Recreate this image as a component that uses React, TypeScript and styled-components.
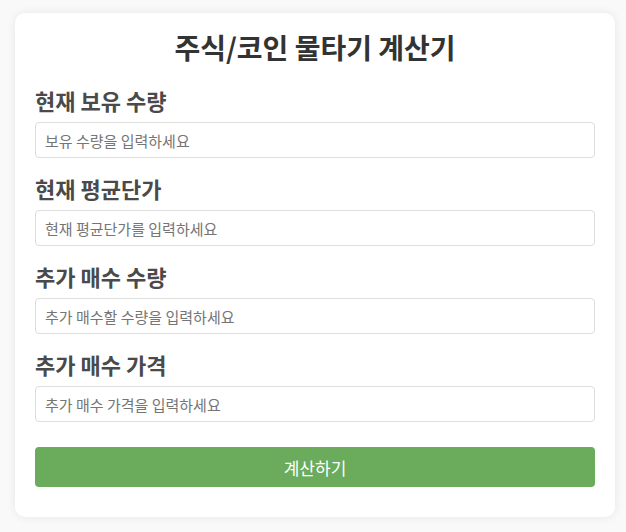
import React from 'react'
import styled, { createGlobalStyle } from 'styled-components'

const GlobalStyle = createGlobalStyle`
	body {
		margin: 0;
		background: #f9f9f9;
		font-family: 'Noto Sans CJK KR', 'Noto Sans', sans-serif;
	}
`

const fields = [
	{ id: 'holding', label: '현재 보유 수량', placeholder: '보유 수량을 입력하세요' },
	{ id: 'avg', label: '현재 평균단가', placeholder: '현재 평균단가를 입력하세요' },
	{ id: 'addQty', label: '추가 매수 수량', placeholder: '추가 매수할 수량을 입력하세요' },
	{ id: 'addPrice', label: '추가 매수 가격', placeholder: '추가 매수 가격을 입력하세요' },
]

export default function App(): JSX.Element {
	return (
		<>
			<GlobalStyle />
			<Page>
				<Card>
					<Title>주식/코인 물타기 계산기</Title>
					{fields.map((f) => (
						<Group key={f.id}>
							<Label htmlFor={f.id}>{f.label}</Label>
							<Input id={f.id} type="number" placeholder={f.placeholder} />
						</Group>
					))}
					<Button type="button">계산하기</Button>
				</Card>
			</Page>
		</>
	)
}

const Page = styled.div`
	padding: 13px 11px 13px 15px;
`

const Card = styled.div`
	box-sizing: border-box;
	width: 600px;
	padding: 20px 20px 30px;
	background: #fff;
	border-radius: 10px;
	box-shadow: 0 0 10px rgba(0, 0, 0, 0.08);
`

const Title = styled.h1`
	margin: 0 0 26px;
	text-align: center;
	font-size: 28px;
	font-weight: 700;
	color: #333;
	line-height: 28px;
`

const Group = styled.div`
	margin-bottom: 17px;
`

const Label = styled.label`
	display: block;
	margin-bottom: 9px;
	font-size: 22px;
	font-weight: 700;
	color: #4a4a4a;
	line-height: 26px;
`

const Input = styled.input`
	box-sizing: border-box;
	display: block;
	width: 100%;
	height: 36px;
	padding: 0 9px;
	border: 1px solid #ddd;
	border-radius: 4px;
	font-family: inherit;
	font-size: 15px;
	color: #333;

	&::placeholder {
		color: #757575;
	}
`

const Button = styled.button`
	display: block;
	width: 100%;
	height: 40px;
	margin-top: 25px;
	border: none;
	border-radius: 4px;
	background: #6aac5c;
	color: #fff;
	font-family: inherit;
	font-size: 17px;
	cursor: pointer;
`
